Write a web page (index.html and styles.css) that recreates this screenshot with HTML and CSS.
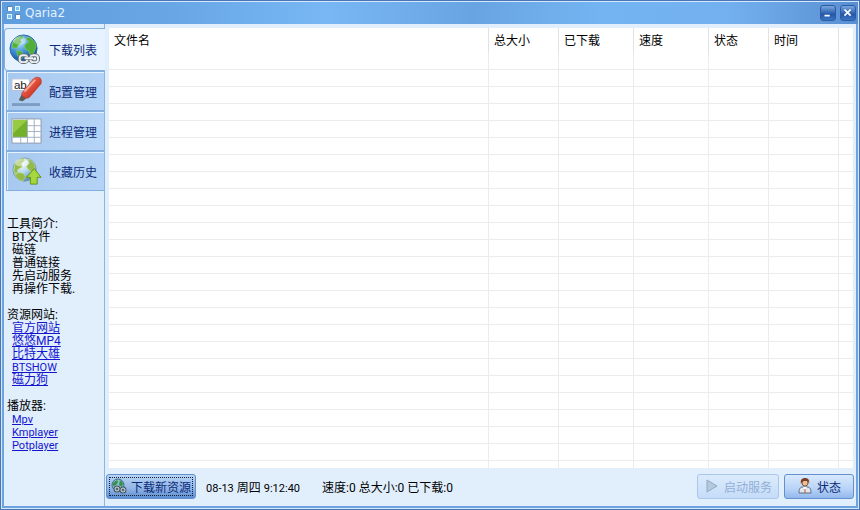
FILE: index.html
```
<!DOCTYPE html>
<html lang="zh-CN">
<head>
<meta charset="UTF-8" />
<title>Qaria2</title>
<link rel="stylesheet" href="styles.css">
</head>
<body>

<div class="window">
  <header class="titlebar">
    <svg class="logo" viewBox="0 0 14 14">
      <rect x="0" y="0" width="5" height="5" fill="#4f83bd"/>
      <rect x="1" y="1" width="4" height="4" fill="#fff"/>
      <rect x="8" y="0" width="5" height="5" fill="#e8f6ff"/>
      <rect x="9" y="1" width="3" height="3" fill="#6cc4fb"/>
      <rect x="0" y="8" width="5" height="5" fill="#e8f6ff"/>
      <rect x="1" y="9" width="3" height="3" fill="#6cc4fb"/>
      <rect x="8" y="8" width="5" height="5" fill="#4f83bd"/>
      <rect x="9" y="9" width="4" height="4" fill="#fff"/>
    </svg>
    <h1>Qaria2</h1>
    <button class="win-btn" aria-label="最小化">
      <svg viewBox="0 0 16 16"><path d="M4 11h6" stroke="#fff" stroke-width="2"/></svg>
    </button>
    <button class="win-btn" aria-label="关闭">
      <svg viewBox="0 0 16 16"><path d="M4 4l7 7M11 4l-7 7" stroke="#fff" stroke-width="2"/></svg>
    </button>
  </header>

  <div class="body">
    <aside class="sidebar">
      <nav class="tabs">
        <button class="tab active">
          <svg viewBox="0 0 32 32">
            <defs>
              <radialGradient id="sea" cx="35%" cy="25%" r="75%">
                <stop offset="0" stop-color="#c8ecff"/><stop offset=".45" stop-color="#4b9be0"/><stop offset="1" stop-color="#0f4c9e"/>
              </radialGradient>
            </defs>
            <circle cx="15" cy="15" r="14" fill="url(#sea)" stroke="#2c67a8"/>
            <path d="M4 9c2-4 5-6 9-7l2 2-3 2 1 3-4 3-1 3-3-1-2 1zM19 3c4 1 7 4 9 8l-1 5-2 5-3 1-2-5-3-1-1-4 3-3 2-1-3-2zM8 17l5 1 2 3-2 5c-3-1-5-4-5-9z" fill="#51ae38" stroke="#8ed461" stroke-width=".6"/>
            <ellipse cx="11" cy="7" rx="7" ry="4" fill="#fff" opacity=".35"/>
            <g fill="none" stroke="#5f696f" stroke-width="4"><rect x="11" y="22" width="8" height="7" rx="3"/><rect x="22" y="22" width="8" height="7" rx="3"/></g>
            <g fill="none" stroke="#e9edef" stroke-width="2"><rect x="11" y="22" width="8" height="7" rx="3"/><rect x="22" y="22" width="8" height="7" rx="3"/></g>
            <path d="M16 25h9" stroke="#5f696f" stroke-width="3"/>
            <path d="M16 25h9" stroke="#f4f6f7" stroke-width="2"/>
          </svg>
          <span>下载列表</span>
        </button>
        <button class="tab">
          <svg viewBox="0 0 32 32">
            <defs>
              <linearGradient id="pen" x1="0" y1="0" x2="1" y2="1">
                <stop offset="0" stop-color="#f9a08a"/><stop offset=".5" stop-color="#df4b37"/><stop offset="1" stop-color="#a91e18"/>
              </linearGradient>
            </defs>
            <rect x="1" y="3" width="18" height="12" fill="#fff" stroke="#b4c4d6"/>
            <text x="3" y="13" class="icon-text">ab</text>
            <path d="M1 28h29v3H1z" fill="#7e9cc4"/>
            <path d="M8 25l3-6 5 4-4 3z" fill="#5e5957"/>
            <path d="M11 18L23 3q3-3 7-1 2 2 1 6L19 22q-2 2-5 0-3-1-3-4z" fill="url(#pen)" stroke="#b8392c" stroke-width=".7"/>
            <path d="M14 16L25 4" stroke="#ffd0c1" stroke-width="2" opacity=".65"/>
          </svg>
          <span>配置管理</span>
        </button>
        <button class="tab">
          <svg viewBox="0 0 32 32">
            <path d="M1 3h30v25H1z" fill="#fff" stroke="#8d9aac"/>
            <path d="M2 4h15v18H2z" fill="#74b12a"/>
            <path d="M2 4h15L2 18z" fill="#97cb43"/>
            <path d="M17 3v25M24 3v25M10 22v6M1 22h30M17 10h14M17 16h14" stroke="#a4b2c4" fill="none"/>
          </svg>
          <span>进程管理</span>
        </button>
        <button class="tab">
          <svg viewBox="0 0 32 32">
            <defs>
              <radialGradient id="pale" cx="35%" cy="25%" r="75%">
                <stop offset="0" stop-color="#fff"/><stop offset=".5" stop-color="#b4d8ee"/><stop offset="1" stop-color="#5d91b6"/>
              </radialGradient>
            </defs>
            <circle cx="14" cy="14" r="12" fill="url(#pale)" stroke="#799cad"/>
            <path d="M4 8c2-3 5-5 9-6l1 3-3 3 1 3-5 3-1 5-3-3zM17 3c4 1 7 4 8 8l-2 6-4-2-3-4 3-4zM7 17l6 1 2 4-3 4c-4-1-7-4-8-7z" fill="#94bb49" stroke="#c6dc8b" stroke-width=".6"/>
            <ellipse cx="11" cy="7" rx="7" ry="4" fill="#fff" opacity=".45"/>
            <path d="M24 13l7 9h-4v7h-7v-7h-4z" fill="#a5d83b" stroke="#648f1d"/>
          </svg>
          <span>收藏历史</span>
        </button>
      </nav>

      <div class="info">
        <section>
          <h2>工具简介:</h2>
          <ul>
            <li>BT文件</li>
            <li>磁链</li>
            <li>普通链接</li>
            <li>先启动服务</li>
            <li>再操作下载.</li>
          </ul>
        </section>
        <section>
          <h2>资源网站:</h2>
          <ul>
            <li><a href="#">官方网站</a></li>
            <li><a href="#">悠悠MP4</a></li>
            <li><a href="#">比特大雄</a></li>
            <li><a href="#" class="en">BTSHOW</a></li>
            <li><a href="#">磁力狗</a></li>
          </ul>
        </section>
        <section>
          <h2>播放器:</h2>
          <ul>
            <li><a href="#" class="en">Mpv</a></li>
            <li><a href="#" class="en">Kmplayer</a></li>
            <li><a href="#" class="en">Potplayer</a></li>
          </ul>
        </section>
      </div>
    </aside>

    <main class="main">
      <div class="list">
        <table>
          <colgroup>
            <col><col class="c-size"><col class="c-done"><col class="c-speed"><col class="c-state"><col class="c-time"><col class="c-rest">
          </colgroup>
          <thead>
            <tr><th>文件名</th><th>总大小</th><th>已下载</th><th>速度</th><th>状态</th><th>时间</th><th></th></tr>
          </thead>
          <tbody id="rows"></tbody>
        </table>
      </div>

      <footer class="statusbar">
        <button class="btn primary">
          <svg viewBox="0 0 16 16">
            <circle cx="7" cy="7" r="6" fill="#8cbccb" stroke="#386d83"/>
            <path d="M2 5l4-3 1 2-2 3-3 1zM9 2l3 3-1 4-3-2z" fill="#329047"/>
            <g fill="none" stroke="#455865" stroke-width="3"><rect x="4" y="9" width="4" height="4" rx="2"/><rect x="10" y="10" width="4" height="4" rx="2"/></g>
            <g fill="none" stroke="#d7e2e8"><rect x="4" y="9" width="4" height="4" rx="2"/><rect x="10" y="10" width="4" height="4" rx="2"/></g>
          </svg>
          下载新资源
        </button>
        <span class="clock"><span class="en">08-13</span> 周四 <span class="en">9:12:40</span></span>
        <span class="totals">速度:0 总大小:0 已下载:0</span>
        <button class="btn" disabled>
          <svg viewBox="0 0 16 16"><path d="M3 2L13 8 3 14z" fill="#b5c9dc" stroke="#8faac6"/></svg>
          启动服务
        </button>
        <button class="btn state">
          <svg viewBox="0 0 16 16">
            <path d="M2 15c0-4 1-6 4-6h4c3 0 4 2 4 6z" fill="#dfe7ef" stroke="#5e6d7e"/>
            <path d="M6 9l2 3 2-3z" fill="#fff"/>
            <path d="M8 11v4" stroke="#d34b32"/>
            <circle cx="8" cy="5" r="3" fill="#f0be94" stroke="#87583b"/>
            <path d="M4 6C3 2 5 0 8 0s5 2 4 6l-1-3-4 0-2 1z" fill="#7a3f20"/>
          </svg>
          状态
        </button>
      </footer>
    </main>
  </div>
</div>

<script>
  const rows = document.getElementById('rows');
  for (let i = 0; i < 25; i++) {
    const tr = rows.insertRow();
    for (let j = 0; j < 7; j++) {
      tr.insertCell();
    }
  }
</script>

</body>
</html>
```
FILE: styles.css
```
* {
  box-sizing: border-box;
}
body {
  margin: 0;
  font-family: Roboto, "Noto Sans CJK SC", sans-serif;
  font-size: 12px;
  color: #000;
}
button {
  font: inherit;
  padding: 0;
}
.en {
  font-size: 11px;
}
.window {
  display: flex;
  flex-direction: column;
  height: 100vh;
  border: 1px solid #4a76b4;
  box-shadow: inset 0 0 0 1px #d3e7ff;
  padding: 1px;
  background: #6fa3df;
}
.titlebar {
  display: flex;
  align-items: center;
  gap: 4px;
  height: 22px;
  padding: 0 2px 0 5px;
  background: linear-gradient(90deg, #609ddd 0%, #68a6e6 20%, #78b7f4 38%, #69a4e2 55%, #74b4f2 70%, #73b0ef 85%, #598fd2 100%);
}
.logo {
  width: 14px;
  height: 14px;
}
.titlebar h1 {
  flex: 1;
  margin: 0;
  font-family: "DejaVu Sans", sans-serif;
  font-size: 12px;
  font-weight: normal;
  color: #e2f1ff;
}
.win-btn {
  width: 16px;
  height: 16px;
  border: 1px solid #2c5ba5;
  border-radius: 3px;
  background: linear-gradient(#79a7df, #2457a8 60%, #3a75c4);
}
.win-btn svg {
  display: block;
  width: 100%;
}
.body {
  flex: 1;
  display: flex;
  min-height: 0;
  margin: 0 2px 2px;
  background: #e1effd;
}
.sidebar {
  width: 101px;
  border-right: 1px solid #8db5e4;
}
.tabs {
  display: flex;
  flex-direction: column;
  padding-top: 4px;
}
.tab {
  display: flex;
  align-items: center;
  gap: 7px;
  height: 40px;
  margin-left: 2px;
  padding-left: 4px;
  border: 1px solid #83aee0;
  border-right: 0;
  box-shadow: inset 1px 1px #e5f2ff;
  background: linear-gradient(90deg, #a8c9ef, #b4d3f6);
  color: #0b2a78;
}
.tab svg {
  width: 31px;
  height: 31px;
}
.tab.active {
  height: 43px;
  margin: 0 -1px 0 0;
  padding-left: 4px;
  gap: 9px;
  border-radius: 4px 0 0 4px;
  background: #e6f2ff;
}
.icon-text {
  font: 12px "Liberation Sans", sans-serif;
  fill: #222;
}
.info {
  display: flex;
  flex-direction: column;
  gap: 13px;
  padding: 27px 0 0 3px;
  line-height: 13px;
}
.info h2 {
  margin: 0;
  font-size: 12px;
  font-weight: normal;
}
.info ul {
  margin: 0;
  padding-left: 5px;
  list-style: none;
}
.info li {
  height: 13px;
}
.info a {
  color: #1515d0;
}
.main {
  flex: 1;
  display: flex;
  flex-direction: column;
  min-width: 0;
}
.list {
  flex: 1;
  min-height: 0;
  margin: 4px 3px 0 4px;
  overflow: hidden;
  background: #fff;
}
table {
  width: 100%;
  table-layout: fixed;
  border-collapse: separate;
  border-spacing: 0;
}
.c-size {
  width: 70px;
}
.c-done, .c-speed {
  width: 75px;
}
.c-state {
  width: 60px;
}
.c-time {
  width: 70px;
}
.c-rest {
  width: 14px;
}
th {
  height: 25px;
  padding: 2px 5px 0;
  border-right: 1px solid #e2e2e2;
  font-weight: normal;
  text-align: left;
  line-height: 17px;
}
td {
  height: 17px;
  padding: 0;
  border-right: 1px solid #ececec;
  border-bottom: 1px solid #ececec;
}
th:last-child, td:last-child {
  border-right: 0;
}
.statusbar {
  display: flex;
  align-items: center;
  height: 38px;
  padding: 0 2px 2px 1px;
}
.btn {
  display: flex;
  align-items: center;
  justify-content: center;
  gap: 4px;
  height: 25px;
  padding: 0 9px;
  border: 1px solid #6590cf;
  border-radius: 3px;
  background: linear-gradient(#d9e9fd, #b8d3f7 60%, #93b8ec);
  color: #0b2a78;
}
.btn svg {
  width: 16px;
  height: 16px;
}
.btn.primary {
  padding: 0 4px;
  background: linear-gradient(#b9d3f3, #90b5e6 60%, #5c8bd0);
  outline: 1px dotted #123;
  outline-offset: -4px;
}
.btn:disabled {
  padding: 0 6px;
  border-color: #a9c6ec;
  background: linear-gradient(#dcebfc, #c5dcf8);
  color: #91afd6;
}
.btn.state {
  margin-left: 5px;
  padding: 0 12px;
}
.clock {
  margin-left: 10px;
}
.totals {
  flex: 1;
  margin-left: 22px;
}
```
